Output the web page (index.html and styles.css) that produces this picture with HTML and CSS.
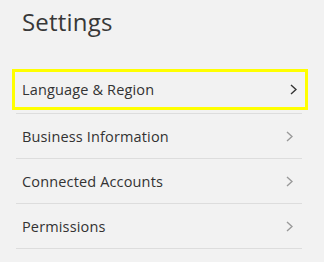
FILE: index.html
```html
<!DOCTYPE html>
<html lang="en">
<head>
<meta charset="utf-8">
<title>Settings</title>
<link rel="stylesheet" href="styles.css">
</head>
<body>
<main class="settings">
  <h1 class="title">Settings</h1>
  <ul class="menu">
    <li class="item">
      <a class="link link--focused" href="#">
        <span class="label">Language &amp; Region</span>
        <svg class="chev chev--dark" width="7" height="11" viewBox="0 0 7 11"><path d="M1 1 L6 5.5 L1 10" fill="none" stroke="currentColor" stroke-width="1.4"/></svg>
      </a>
    </li>
    <li class="item">
      <a class="link" href="#">
        <span class="label">Business Information</span>
        <svg class="chev" width="7" height="11" viewBox="0 0 7 11"><path d="M1 1 L6 5.5 L1 10" fill="none" stroke="currentColor" stroke-width="1.4"/></svg>
      </a>
    </li>
    <li class="item">
      <a class="link" href="#">
        <span class="label">Connected Accounts</span>
        <svg class="chev" width="7" height="11" viewBox="0 0 7 11"><path d="M1 1 L6 5.5 L1 10" fill="none" stroke="currentColor" stroke-width="1.4"/></svg>
      </a>
    </li>
    <li class="item">
      <a class="link" href="#">
        <span class="label">Permissions</span>
        <svg class="chev" width="7" height="11" viewBox="0 0 7 11"><path d="M1 1 L6 5.5 L1 10" fill="none" stroke="currentColor" stroke-width="1.4"/></svg>
      </a>
    </li>
  </ul>
</main>
</body>
</html>
```

FILE: styles.css
```css
html, body {
  margin: 0;
  background: #f2f2f2;
}

body {
  font-family: "Open Sans", "DejaVu Sans", sans-serif;
  color: #333333;
}

.settings {
  padding: 6px 22px 0 16px;
}

.title {
  margin: 0 0 31px 6px;
  font-size: 24px;
  line-height: 32px;
  font-weight: 400;
  letter-spacing: 0.2px;
  color: #383838;
}

.menu {
  list-style: none;
  margin: 0;
  padding: 0;
  width: 286px;
}

.item {
  height: 44px;
  border-bottom: 1px solid #dddddd;
  display: flex;
  align-items: center;
}

.link {
  flex: 1;
  display: flex;
  align-items: center;
  justify-content: space-between;
  box-sizing: border-box;
  height: 44px;
  padding: 0 9px 0 6px;
  color: #333333;
  text-decoration: none;
  font-size: 14.5px;
  letter-spacing: 0.15px;
}

.link--focused {
  align-self: flex-start;
  height: 41px;
  margin: 0 -6px 0 -4px;
  border: 3px solid #ffff00;
  padding: 0 8px 0 7px;
}

.chev {
  display: block;
  color: #9a9a9a;
}

.chev--dark {
  color: #333333;
}
```
